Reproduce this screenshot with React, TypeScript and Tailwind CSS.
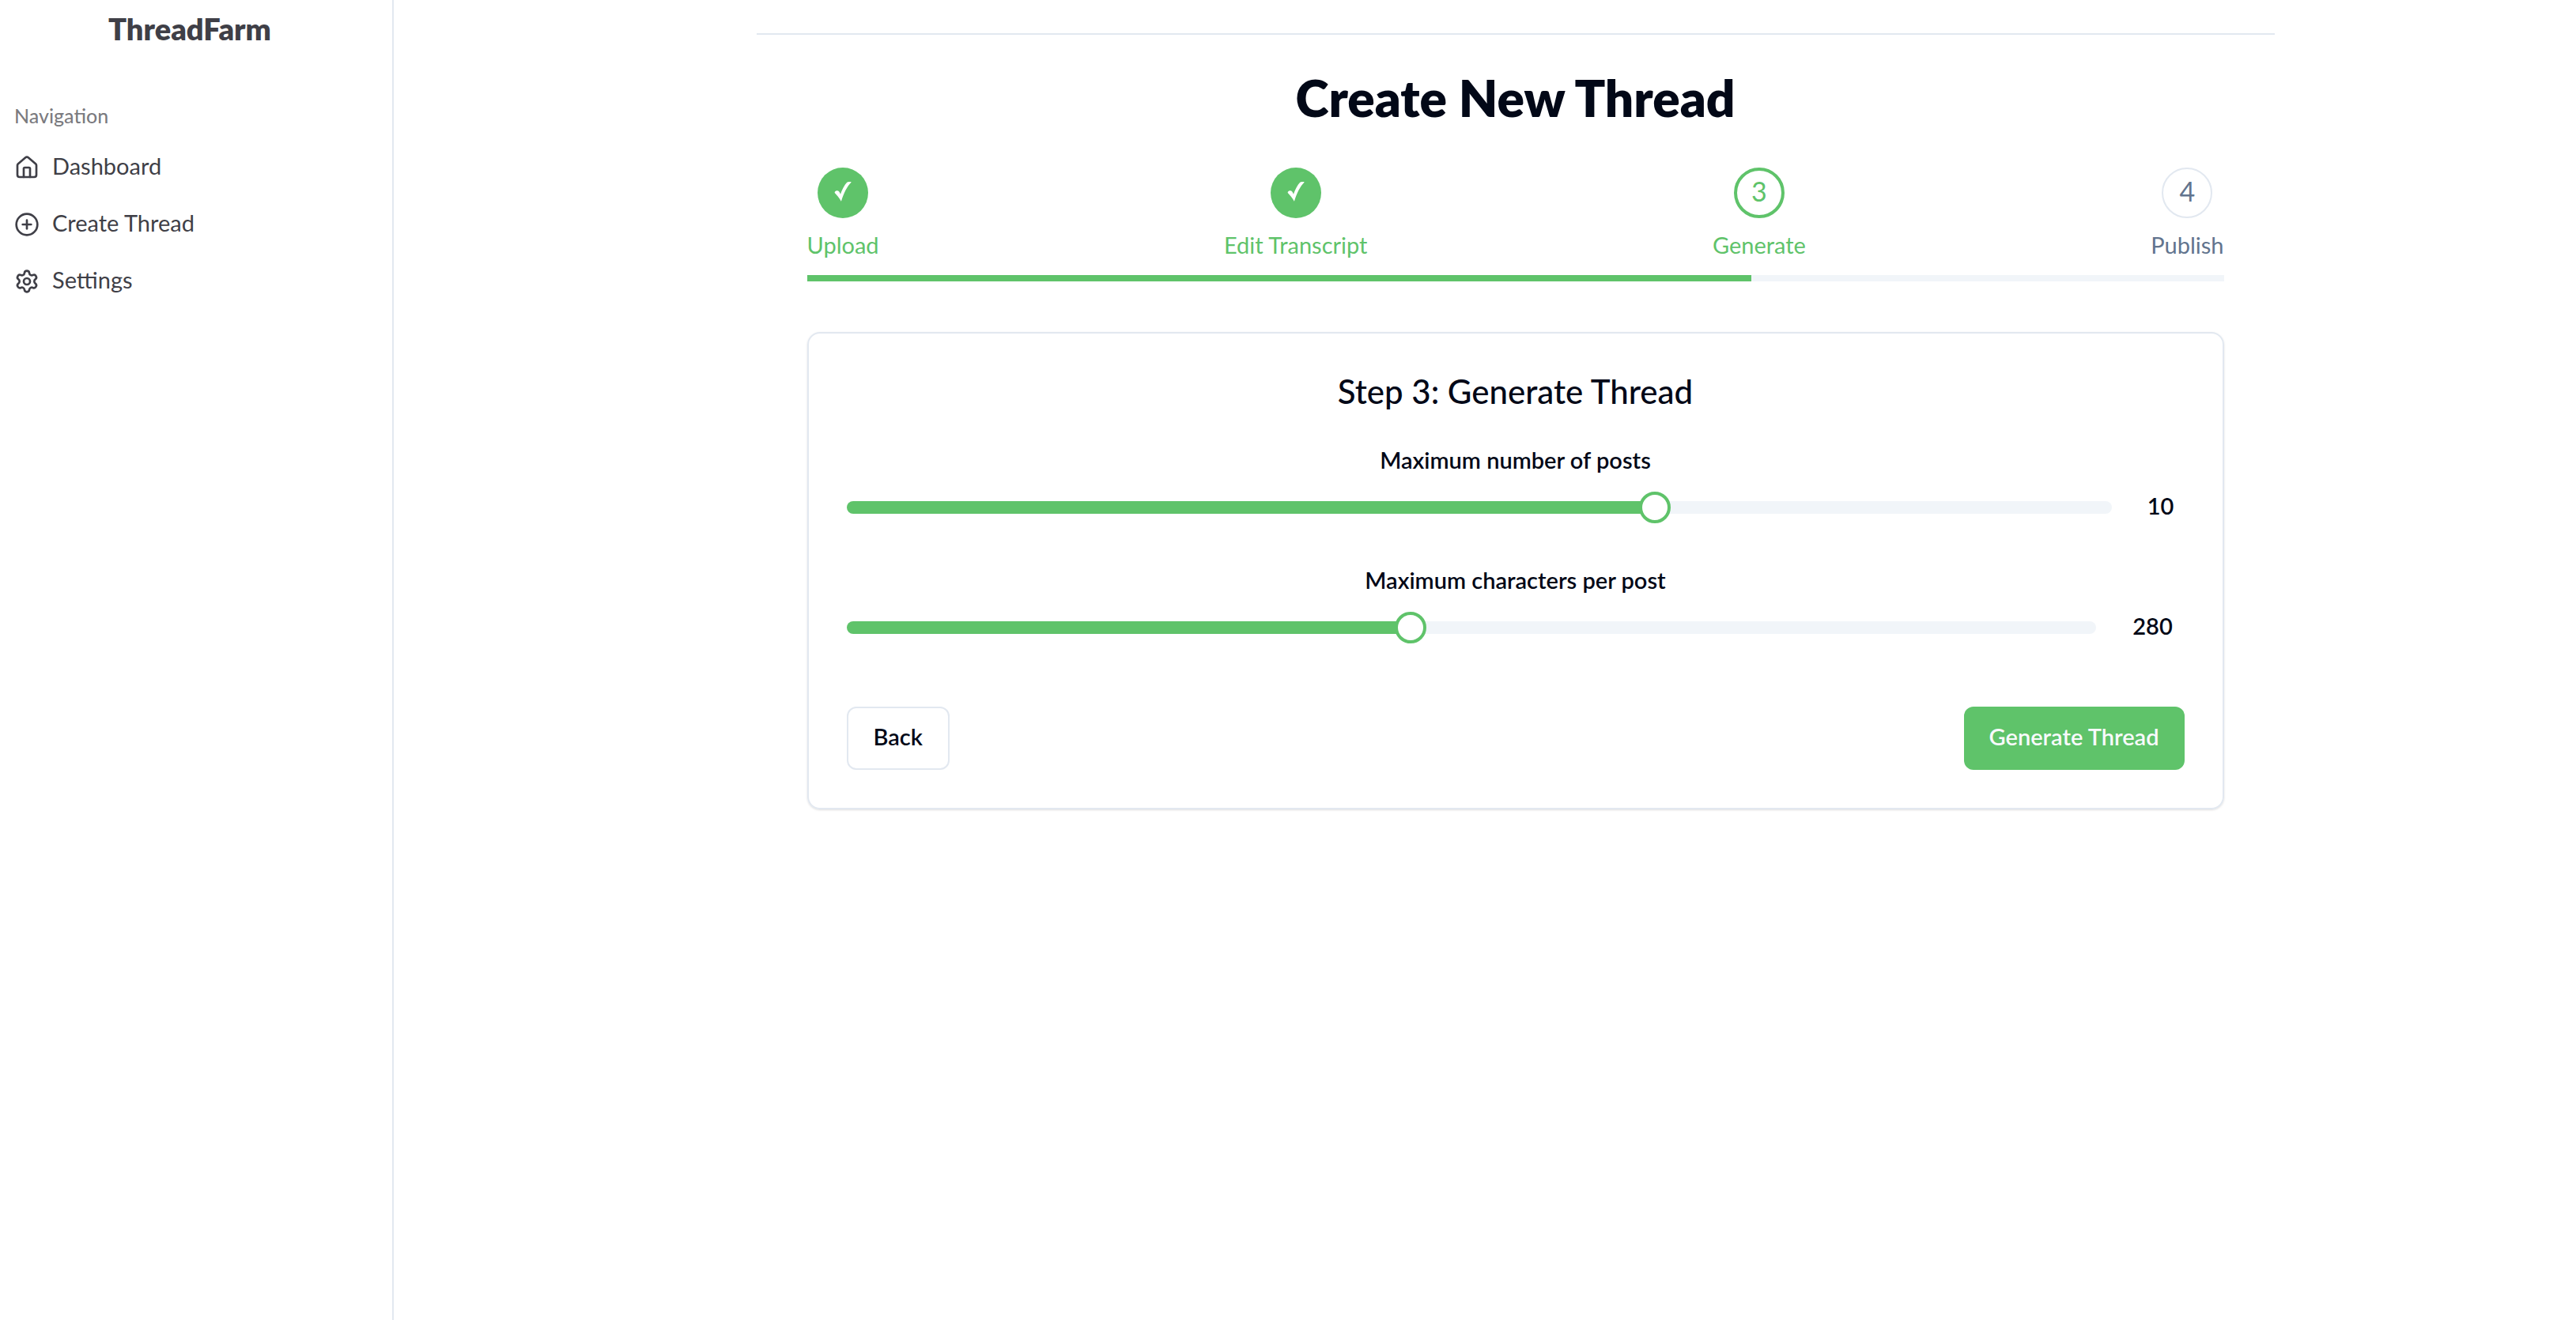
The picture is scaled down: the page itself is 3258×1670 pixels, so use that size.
import React, { useState } from 'react';
import { CirclePlus, House, Settings, type LucideIcon } from 'lucide-react';

const navItems: { label: string; icon: LucideIcon }[] = [
  { label: 'Dashboard', icon: House },
  { label: 'Create Thread', icon: CirclePlus },
  { label: 'Settings', icon: Settings },
];

type StepState = 'done' | 'current' | 'upcoming';

const steps: { label: string; state: StepState }[] = [
  { label: 'Upload', state: 'done' },
  { label: 'Edit Transcript', state: 'done' },
  { label: 'Generate', state: 'current' },
  { label: 'Publish', state: 'upcoming' },
];

const circleStyles: Record<StepState, string> = {
  done: 'bg-[#5fc36a] text-white',
  current: 'border-4 border-[#5fc36a] text-[#5fc36a]',
  upcoming: 'border-2 border-slate-200 text-slate-500',
};

function CheckMark() {
  return (
    <svg viewBox="0 0 22 26" className="h-[26px] w-[22px]" fill="currentColor" aria-label="Completed">
      <path d="M0.7 13.9C1.5 12.5 3 11.9 4.4 12.3C6 12.8 7.2 14.6 8 16.8C10.4 10.4 13.2 4.8 16 2.1C17.2 1 19.8 0.9 21.8 1.4C16.6 6.4 12.4 14.6 8.9 25.8C6.6 21.6 3.8 18 0.7 14.9Z" />
    </svg>
  );
}

function Sidebar() {
  return (
    <aside className="w-[498px] shrink-0 border-r-2 border-slate-200 text-zinc-700">
      <div className="pr-4 text-center text-[38px] leading-[72px] font-extrabold">ThreadFarm</div>
      <nav className="px-[18px] pt-[50px]" aria-label="Navigation">
        <h2 className="mb-1.5 text-[25px] leading-[48px] font-medium text-zinc-700/70">Navigation</h2>
        <ul>
          {navItems.map(({ label, icon: Icon }) => (
            <li key={label}>
              <a href="#" className="flex h-[72px] items-center gap-4">
                <Icon className="size-8" />
                <span className="pb-1 text-[29px] leading-10">{label}</span>
              </a>
            </li>
          ))}
        </ul>
      </nav>
    </aside>
  );
}

function Stepper() {
  return (
    <div>
      <ol className="flex justify-between">
        {steps.map(({ label, state }, i) => (
          <li key={label} className="flex flex-col items-center gap-3.5">
            <div className={`flex size-16 items-center justify-center rounded-full pb-1 text-[34px] leading-10 ${circleStyles[state]}`}>
              {state === 'done' ? <CheckMark /> : i + 1}
            </div>
            <span className={`text-[29px] leading-10 ${state === 'upcoming' ? 'text-slate-500' : 'text-[#5fc36a]'}`}>
              {label}
            </span>
          </li>
        ))}
      </ol>
      <div className="mt-[18px] h-2 bg-slate-100">
        <div className="h-full w-2/3 bg-[#5fc36a]" />
      </div>
    </div>
  );
}

interface RangeFieldProps {
  id: string;
  label: string;
  min: number;
  max: number;
  step: number;
  initial: number;
  outputWidth: string;
}

function RangeField({ id, label, min, max, step, initial, outputWidth }: RangeFieldProps) {
  const [value, setValue] = useState(initial);
  const fill = ((value - min) / (max - min)) * 100;
  return (
    <div>
      <label htmlFor={id} className="block text-center text-[29px] leading-10 font-semibold">
        {label}
      </label>
      <div className="mt-5 flex items-center gap-8">
        <input
          id={id}
          type="range"
          min={min}
          max={max}
          step={step}
          value={value}
          onChange={(e) => setValue(Number(e.target.value))}
          style={{ backgroundImage: `linear-gradient(to right, #5fc36a ${fill}%, #f1f5f9 ${fill}%)` }}
          className="h-4 min-w-0 flex-1 cursor-pointer appearance-none rounded-full [&::-webkit-slider-thumb]:size-10 [&::-webkit-slider-thumb]:appearance-none [&::-webkit-slider-thumb]:rounded-full [&::-webkit-slider-thumb]:border-4 [&::-webkit-slider-thumb]:border-solid [&::-webkit-slider-thumb]:border-[#5fc36a] [&::-webkit-slider-thumb]:bg-white"
        />
        <output htmlFor={id} className={`h-10 pb-1 text-center text-[29px] leading-9 font-semibold ${outputWidth}`}>
          {value}
        </output>
      </div>
    </div>
  );
}

export default function App() {
  return (
    <div className="flex min-h-screen bg-white font-['Lato',sans-serif] text-[#020817]">
      <Sidebar />
      <main className="min-w-0 flex-1 pt-[42px] pl-[77px]">
        <div className="mx-auto max-w-[1920px] border-t-2 border-slate-200 px-16 pt-10">
          <h1 className="text-center text-[64px] leading-[80px] font-extrabold">Create New Thread</h1>
          <div className="mt-12">
            <Stepper />
          </div>
          <section className="mt-16 rounded-2xl border-2 border-slate-200 p-12 shadow-sm">
            <h2 className="text-center text-[42px] leading-[50px] font-medium">Step 3: Generate Thread</h2>
            <div className="mt-[42px] flex flex-col gap-[52px]">
              <RangeField id="max-posts" label="Maximum number of posts" min={1} max={15} step={1} initial={10} outputWidth="w-[60px]" />
              <RangeField id="max-characters" label="Maximum characters per post" min={100} max={500} step={10} initial={280} outputWidth="w-20" />
            </div>
            <div className="mt-20 flex justify-between">
              <button type="button" className="h-20 rounded-xl border-2 border-slate-200 px-8 pb-1 text-[29px] font-semibold">
                Back
              </button>
              <button type="button" className="h-20 rounded-xl bg-[#5fc36a] px-8 pb-1 text-[29px] font-semibold text-slate-50">
                Generate Thread
              </button>
            </div>
          </section>
        </div>
      </main>
    </div>
  );
}
